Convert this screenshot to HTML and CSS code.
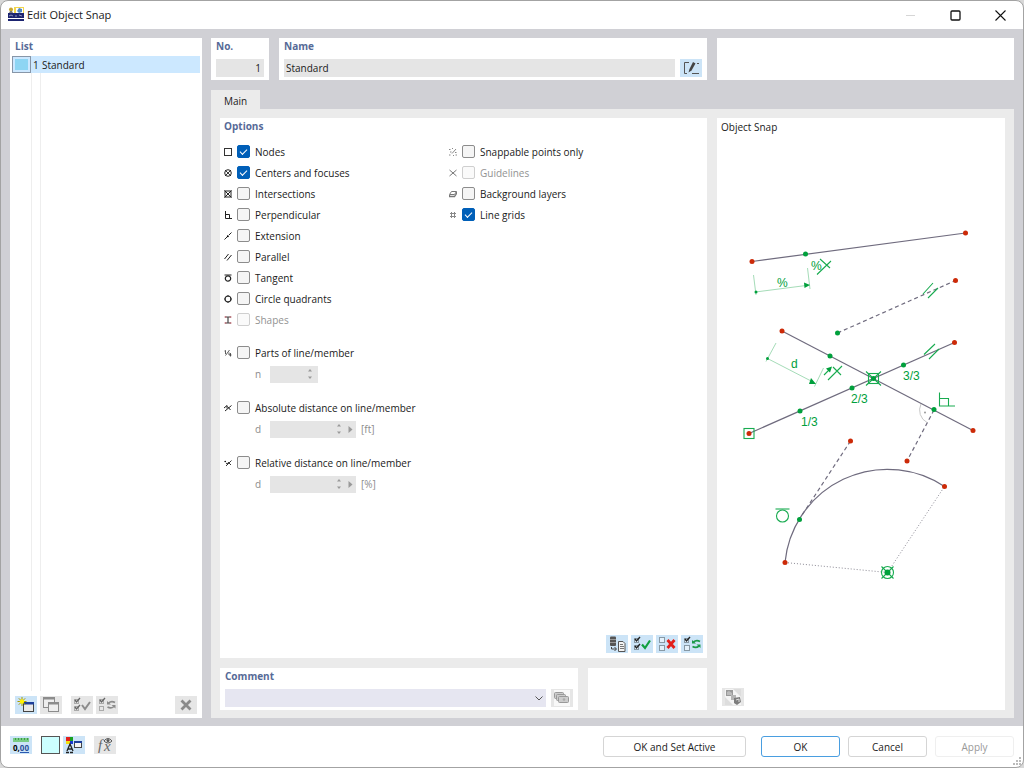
FILE: index.html
```
<!DOCTYPE html>
<html lang="en">
<head>
    <meta charset="UTF-8">
    <meta name="viewport" content="width=device-width, initial-scale=1.0">
    <title>Edit Object Snap</title>
    <link rel="stylesheet" href="styles.css">
</head>
<body>
    <div class="window">
        <header class="titlebar">
            <svg class="app-icon" width="16" height="16" viewBox="0 0 16 16">
                <rect x="6" y="0" width="10" height="8" fill="#f2d64c"/>
                <rect x="0" y="6" width="16" height="5" fill="#1c2470"/>
                <rect x="0" y="12" width="16" height="2" fill="#1c2470"/>
                <circle cx="3" cy="2.500" r="2" fill="#c9a62c"/>
                <path d="M1 6h4l-1-2H2z" fill="#777"/>
                <rect x="8" y="1" width="7" height="5" fill="#fff"/>
                <path d="M9 4l2-3 3 1v3l-3 1z" fill="#4f86c6"/>
                <path d="M1 9l2-1 2 1M7 9h2M11 8l3 1" stroke="#8d93c0" fill="none"/>
            </svg>
            <h1 class="title">Edit Object Snap</h1>
            <div class="window-buttons">
                <button type="button" class="window-btn" aria-label="Minimize" disabled>
                    <svg width="11" height="11" viewBox="0 0 11 11"><path d="M1 5.500h9" stroke="#d6d6d6"/></svg>
                </button>
                <button type="button" class="window-btn" aria-label="Maximize">
                    <svg width="11" height="11" viewBox="0 0 11 11"><rect x="1" y="1" width="9" height="9" rx="1" fill="none" stroke="#111" stroke-width="1.300"/></svg>
                </button>
                <button type="button" class="window-btn" aria-label="Close">
                    <svg width="11" height="11" viewBox="0 0 11 11"><path d="M.5.5l10 10M10.500.5l-10 10" stroke="#111" stroke-width="1.100"/></svg>
                </button>
            </div>
        </header>

        <main class="content">
            <section class="panel list-panel">
                <h2 class="label">List</h2>
                <div class="list-body">
                    <div class="list-row">
                        <span class="list-color"></span>
                        <span class="list-no">1</span>
                        <span>Standard</span>
                    </div>
                </div>
                <div class="toolbar list-toolbar">
                    <button type="button" class="tool" aria-label="New">
                        <svg width="20" height="18" viewBox="0 0 20 18">
                            <rect x="7.500" y="6.500" width="10" height="9" fill="#e9e9e9" stroke="#444"/>
                            <rect x="8" y="6" width="10" height="2.500" fill="#1d3f9c"/>
                            <path d="M6 1v9M1.500 5.500h9M2.800 2.300l6.400 6.400M9.200 2.300L2.800 8.700" stroke="#a99a00"/>
                            <circle cx="6" cy="5.500" r="2.200" fill="#fff200"/>
                        </svg>
                    </button>
                    <button type="button" class="tool off" aria-label="Copy" disabled>
                        <svg width="20" height="18" viewBox="0 0 20 18">
                            <g fill="#eee" stroke="#8c8c8c"><rect x="2.500" y="1.500" width="11" height="10"/><rect x="7.500" y="6.500" width="10" height="9"/></g>
                            <path d="M2 2.500h12M7 7.500h11" stroke="#8c8c8c" stroke-width="2"/>
                        </svg>
                    </button>
                    <button type="button" class="tool off spaced" aria-label="Select all" disabled>
                        <svg width="20" height="18" viewBox="0 0 20 18">
                            <g fill="none" stroke="#aaa"><rect x="2.500" y="3.500" width="4" height="4"/><rect x="2.500" y="10.500" width="4" height="4"/></g>
                            <path d="M3 4l1.500 2L8 2M3 11l1.500 2L8 9" fill="none" stroke="#666" stroke-width="1.300"/>
                            <path d="M10 9l3 4 5-7" fill="none" stroke="#8c8c8c" stroke-width="2"/>
                        </svg>
                    </button>
                    <button type="button" class="tool off" aria-label="Invert selection" disabled>
                        <svg width="20" height="18" viewBox="0 0 20 18">
                            <g fill="none" stroke="#aaa"><rect x="2.500" y="3.500" width="4" height="4"/><rect x="2.500" y="10.500" width="4" height="4"/></g>
                            <path d="M3 4l1.500 2L8 2" fill="none" stroke="#666" stroke-width="1.300"/>
                            <path d="M11.500 7q3-2.500 6.500-.5M17 10.500q-3 2.500-6.500.5" fill="none" stroke="#8c8c8c" stroke-width="1.600"/>
                            <path d="M10 5v3.500h4zM18.500 12.500V9h-4z" fill="#8c8c8c"/>
                        </svg>
                    </button>
                    <button type="button" class="tool off last" aria-label="Delete" disabled>
                        <svg width="20" height="18" viewBox="0 0 20 18"><path d="M5.500 4.500l9 9M14.500 4.500l-9 9" stroke="#8a8a8a" stroke-width="2.800"/></svg>
                    </button>
                </div>
            </section>

            <div class="details">
                <div class="top-row">
                    <section class="panel field-panel">
                        <label class="label" for="no">No.</label>
                        <input class="field number" id="no" type="text" value="1" readonly>
                    </section>
                    <section class="panel field-panel">
                        <label class="label" for="name">Name</label>
                        <div class="field-line">
                            <input class="field" id="name" type="text" value="Standard">
                            <button type="button" class="tool" aria-label="Edit name">
                                <svg width="20" height="18" viewBox="0 0 20 18">
                                    <path d="M8 3.500H3.500v11H6M11 14.500h7M16 4.500h2" fill="none" stroke="#555"/>
                                    <path d="M7.500 13.500l1-3.500L12 3l2.500 1.500-4 7z" fill="#444"/>
                                </svg>
                            </button>
                        </div>
                    </section>
                    <section class="panel"></section>
                </div>

                <nav class="tabs">
                    <button type="button" class="tab">Main</button>
                </nav>

                <div class="tab-page">
                    <div class="left-side">
                        <section class="panel options-panel">
                            <h2 class="label">Options</h2>
                            <div class="options">
                                <div class="option-column">
                                    <div class="option">
                                        <svg width="8" height="8" viewBox="0 0 8 8"><rect x=".5" y=".5" width="7" height="7" fill="none" stroke="#333"/></svg>
                                        <input type="checkbox" id="nodes" checked><label for="nodes">Nodes</label>
                                    </div>
                                    <div class="option">
                                        <svg width="8" height="8" viewBox="0 0 8 8"><circle cx="4" cy="4" r="3.300" fill="none" stroke="#222"/><path d="M1 1l6 6M7 1L1 7" stroke="#222" stroke-width=".9"/></svg>
                                        <input type="checkbox" id="centers" checked><label for="centers">Centers and focuses</label>
                                    </div>
                                    <div class="option">
                                        <svg width="8" height="8" viewBox="0 0 8 8"><rect x="1" y="1" width="6" height="6" fill="none" stroke="#222"/><path d="M.5.5l7 7M7.500.5l-7 7" stroke="#222"/></svg>
                                        <input type="checkbox" id="intersections"><label for="intersections">Intersections</label>
                                    </div>
                                    <div class="option">
                                        <svg width="8" height="8" viewBox="0 0 8 8"><path d="M1.500 0v7.500H8M1.500 3.500h4v4" fill="none" stroke="#222"/></svg>
                                        <input type="checkbox" id="perpendicular"><label for="perpendicular">Perpendicular</label>
                                    </div>
                                    <div class="option">
                                        <svg width="8" height="8" viewBox="0 0 8 8"><path d="M.5 7.500L4 4M5 3L7.500.5" stroke="#222"/><circle cx="3.800" cy="4.200" r="1"/></svg>
                                        <input type="checkbox" id="extension"><label for="extension">Extension</label>
                                    </div>
                                    <div class="option">
                                        <svg width="8" height="8" viewBox="0 0 8 8"><path d="M.5 6l4-5M3 7.500l4.500-5.500" stroke="#222"/></svg>
                                        <input type="checkbox" id="parallel"><label for="parallel">Parallel</label>
                                    </div>
                                    <div class="option">
                                        <svg width="8" height="8" viewBox="0 0 8 8"><path d="M.5 1h7" stroke="#222"/><circle cx="4" cy="4.500" r="2.700" fill="none" stroke="#222" stroke-width="1.200"/></svg>
                                        <input type="checkbox" id="tangent"><label for="tangent">Tangent</label>
                                    </div>
                                    <div class="option">
                                        <svg width="8" height="8" viewBox="0 0 8 8"><circle cx="4" cy="4" r="3" fill="none" stroke="#222" stroke-width="1.200"/><path d="M4 .3v1.500M4 6.200v1.500M.3 4h1.500M6.200 4h1.500" stroke="#222" stroke-width="1.200"/></svg>
                                        <input type="checkbox" id="quadrants"><label for="quadrants">Circle quadrants</label>
                                    </div>
                                    <div class="option">
                                        <svg width="8" height="8" viewBox="0 0 8 8"><path d="M1 1h6M1 7h6M4 1v6" stroke="#444" stroke-width="1.200"/><path d="M.5 1h2M5.500 1h2M.5 7h2M5.500 7h2" stroke="#d0606c"/></svg>
                                        <input type="checkbox" id="shapes" disabled><label for="shapes">Shapes</label>
                                    </div>

                                    <div class="option-group">
                                        <div class="option">
                                            <svg width="8" height="8" viewBox="0 0 8 8"><path d="M.5 2l1-.5V5M1.500 6.500l4-5.500M5 3.500v2.500h2.500M6.500 4v3.500" fill="none" stroke="#333" stroke-width=".8"/></svg>
                                            <input type="checkbox" id="parts"><label for="parts">Parts of line/member</label>
                                        </div>
                                        <div class="value-line">
                                            <label for="parts-n">n</label>
                                            <span class="spin short">
                                                <input type="text" id="parts-n" disabled>
                                                <svg width="6" height="12" viewBox="0 0 6 12"><path d="M1 3.500l2-2.500 2 2.500zM1 8.500L3 11l2-2.500z" fill="#999"/></svg>
                                            </span>
                                        </div>
                                    </div>
                                    <div class="option-group">
                                        <div class="option">
                                            <svg width="8" height="8" viewBox="0 0 8 8"><path d="M1 7l6.500-5.500M0 4l3-2.500v3M3.500 2.500l3 3.500" fill="none" stroke="#222"/></svg>
                                            <input type="checkbox" id="absolute"><label for="absolute">Absolute distance on line/member</label>
                                        </div>
                                        <div class="value-line">
                                            <label for="absolute-d">d</label>
                                            <span class="spin">
                                                <input type="text" id="absolute-d" disabled>
                                                <svg width="6" height="12" viewBox="0 0 6 12"><path d="M1 3.500l2-2.500 2 2.500zM1 8.500L3 11l2-2.500z" fill="#999"/></svg>
                                                <svg width="5" height="7" viewBox="0 0 5 7"><path d="M.5 0v7L4.500 3.500z" fill="#999"/></svg>
                                            </span>
                                            <span>[ft]</span>
                                        </div>
                                    </div>
                                    <div class="option-group">
                                        <div class="option">
                                            <svg width="8" height="8" viewBox="0 0 8 8"><path d="M2 7l5.500-5.500M4 3l3 3" fill="none" stroke="#222" stroke-width=".9"/><circle cx="1.200" cy="2.500" r=".8"/><circle cx="3" cy="4.500" r=".8"/></svg>
                                            <input type="checkbox" id="relative"><label for="relative">Relative distance on line/member</label>
                                        </div>
                                        <div class="value-line">
                                            <label for="relative-d">d</label>
                                            <span class="spin">
                                                <input type="text" id="relative-d" disabled>
                                                <svg width="6" height="12" viewBox="0 0 6 12"><path d="M1 3.500l2-2.500 2 2.500zM1 8.500L3 11l2-2.500z" fill="#999"/></svg>
                                                <svg width="5" height="7" viewBox="0 0 5 7"><path d="M.5 0v7L4.500 3.500z" fill="#999"/></svg>
                                            </span>
                                            <span>[%]</span>
                                        </div>
                                    </div>
                                </div>

                                <div class="option-column">
                                    <div class="option">
                                        <svg width="8" height="8" viewBox="0 0 8 8"><path d="M0 1.500h1.500M3 .5h1M1 4h1.500M3 5.500l4-4.500M0 7h1.500M4 7.500h1M6 4.500h1.500M6.500 7H8" stroke="#888"/></svg>
                                        <input type="checkbox" id="snappable"><label for="snappable">Snappable points only</label>
                                    </div>
                                    <div class="option">
                                        <svg width="8" height="8" viewBox="0 0 8 8"><path d="M.5 1l7 6M7.500 1l-7 6" stroke="#777"/></svg>
                                        <input type="checkbox" id="guidelines" disabled><label for="guidelines">Guidelines</label>
                                    </div>
                                    <div class="option">
                                        <svg width="8" height="8" viewBox="0 0 8 8"><path d="M2.500 1.500h5l-2 3h-5z" fill="#fff" stroke="#777"/><path d="M.5 5v1.500h5l2-3V2" fill="none" stroke="#777" stroke-width="1.300"/></svg>
                                        <input type="checkbox" id="background"><label for="background">Background layers</label>
                                    </div>
                                    <div class="option">
                                        <svg width="8" height="8" viewBox="0 0 8 8"><path d="M2.500 1v6M5.500 1v6M1 2.500h6M1 5.500h6" stroke="#888"/></svg>
                                        <input type="checkbox" id="grids" checked><label for="grids">Line grids</label>
                                    </div>
                                </div>
                            </div>
                            <div class="toolbar options-toolbar">
                                <button type="button" class="tool" aria-label="Copy from list">
                                    <svg width="20" height="18" viewBox="0 0 20 18">
                                        <rect x="3" y="1.500" width="6" height="9.500" rx="1" fill="#555"/>
                                        <path d="M3 4.500h6M3 7.500h6" stroke="#aaa" stroke-width=".8"/>
                                        <path d="M4.500 12v2h4.500M7.500 12l2 2-2 2" fill="none" stroke="#444"/>
                                        <path d="M11.500 6.500h4.500l2 2v8h-6.500z" fill="#f3f3f3" stroke="#555"/>
                                        <path d="M13 9.500h3M13 11.500h4M13 13.500h4" stroke="#777"/>
                                    </svg>
                                </button>
                                <button type="button" class="tool" aria-label="Check all">
                                    <svg width="20" height="18" viewBox="0 0 20 18">
                                        <g fill="#e4f1fb" stroke="#8899a5"><rect x="2.500" y="3.500" width="4" height="4"/><rect x="2.500" y="10.500" width="4" height="4"/></g>
                                        <path d="M3 4l1.500 2L8 2M3 11l1.500 2L8 9" fill="none" stroke="#222" stroke-width="1.400"/>
                                        <path d="M10 9.500l3 3.500 5-7.500" fill="none" stroke="#10a040" stroke-width="2.200"/>
                                    </svg>
                                </button>
                                <button type="button" class="tool" aria-label="Uncheck all">
                                    <svg width="20" height="18" viewBox="0 0 20 18">
                                        <g fill="#e4f1fb" stroke="#8899a5"><rect x="2.500" y="2.500" width="5" height="5"/><rect x="2.500" y="10.500" width="5" height="5"/></g>
                                        <path d="M10.500 5l7 8M17.500 5l-7 8" stroke="#e3201b" stroke-width="2.800"/>
                                    </svg>
                                </button>
                                <button type="button" class="tool" aria-label="Invert checks">
                                    <svg width="20" height="18" viewBox="0 0 20 18">
                                        <g fill="#e4f1fb" stroke="#8899a5"><rect x="2.500" y="3.500" width="4" height="4"/><rect x="2.500" y="10.500" width="5" height="5"/></g>
                                        <path d="M3 4l1.500 2L8 2" fill="none" stroke="#222" stroke-width="1.400"/>
                                        <path d="M11.500 7q3-2.500 6.500-.5M17 11q-3 2.500-6.500.5" fill="none" stroke="#1b9a48" stroke-width="1.700"/>
                                        <path d="M10 5v3.500h4zM18.500 13V9.500h-4z" fill="#1b9a48"/>
                                    </svg>
                                </button>
                            </div>
                        </section>

                        <div class="comment-row">
                            <section class="panel field-panel">
                                <label class="label" for="comment">Comment</label>
                                <div class="field-line">
                                    <select class="comment-select" id="comment"><option></option></select>
                                    <button type="button" class="tool off" aria-label="Comment library">
                                        <svg width="20" height="18" viewBox="0 0 20 18">
                                            <rect x="2" y="1" width="16" height="16" fill="#f8f8f8"/>
                                            <g fill="#ccc" stroke="#999"><rect x="2.500" y="3.500" width="9" height="6" rx="1"/><rect x="4.500" y="5.500" width="9" height="6" rx="1"/><rect x="6.500" y="7.500" width="10" height="6" rx="1"/></g>
                                            <circle cx="12" cy="10.500" r="1.300" fill="#aaa"/>
                                        </svg>
                                    </button>
                                </div>
                            </section>
                            <section class="panel"></section>
                        </div>
                    </div>

                    <section class="panel preview-panel">
                        <h2 class="preview-title">Object Snap</h2>
                        <svg class="preview" viewBox="717 140 288 546">
                            <!-- solid lines and arc -->
                            <g fill="none" stroke="#6f6b7e" stroke-width="1.200">
                                <path d="M752 260.500L965.500 232"/>
                                <path d="M782 330L973 429.500"/>
                                <path d="M749 432.500L954.500 341.500"/>
                                <path d="M785 561.500A103 103 0 0 1 944.500 485.500"/>
                                <g stroke-dasharray="4 3">
                                    <path d="M837.500 332L955.500 279.500"/>
                                    <path d="M934 409L907 460"/>
                                    <path d="M850.500 440L808 505L799 518.500"/>
                                </g>
                                <g stroke="#8b8994" stroke-width="1" stroke-dasharray="1 2">
                                    <path d="M785 561.500L887.500 571.500L944.500 485.500"/>
                                </g>
                                <path d="M921 403A14 14 0 0 0 927 421.500" stroke="#c8c8c8" stroke-width="1"/>
                            </g>
                            <!-- dimension lines -->
                            <g fill="none" stroke="#a5dcb8">
                                <path d="M755.500 291L806 284.500M753.500 274l2.500 20M807.500 267l2.500 21"/>
                                <path d="M767.500 357.500L813 381M776 342l-10 18.500M823.500 367l-9 18.500"/>
                            </g>
                            <!-- snap symbols -->
                            <g fill="none" stroke="#18ab50" stroke-width="1.100">
                                <path d="M817 273.500l14-13.500M820 258l10 9"/>
                                <path d="M923 293l10-11M928 297l10-10"/>
                                <path d="M924 353.500l11-10.500M929 358l10-10"/>
                                <path d="M828 379l14-14M833 366l8 8M824 374l5-5"/>
                                <rect x="868.500" y="372.500" width="10" height="10"/>
                                <path d="M866 370.500l15 14M881 370.500l-15 14"/>
                                <path d="M939.500 391.500V405H955M939.500 397.500h9V405"/>
                                <rect x="744" y="427.500" width="10" height="10"/>
                                <path d="M775.500 508h14"/>
                                <circle cx="782.500" cy="515" r="6"/>
                                <circle cx="887.500" cy="571.500" r="6"/>
                                <path d="M881.500 565.500l12 12M893.500 565.500l-12 12"/>
                            </g>
                            <g fill="#00a03c">
                                <path d="M804 281.500l6 2.500-5.500 3zM811 377l5 6h-7zM832 365.500l-2 6-4-4z"/>
                                <circle cx="756" cy="291" r="1.500"/>
                                <circle cx="767.500" cy="357.500" r="1.500"/>
                                <circle cx="805.500" cy="253" r="2.500"/>
                                <circle cx="837.500" cy="332" r="2.500"/>
                                <circle cx="830" cy="355" r="2.500"/>
                                <circle cx="873.500" cy="377.500" r="2.500"/>
                                <circle cx="903.500" cy="364" r="2.500"/>
                                <circle cx="852" cy="387" r="2.500"/>
                                <circle cx="800" cy="410" r="2.500"/>
                                <circle cx="934" cy="408.500" r="2.500"/>
                                <circle cx="799.500" cy="518.500" r="2.500"/>
                                <circle cx="887.500" cy="571.500" r="3"/>
                            </g>
                            <g fill="#cc2a08">
                                <circle cx="752" cy="260.500" r="2.500"/>
                                <circle cx="965.500" cy="232" r="2.500"/>
                                <circle cx="955.500" cy="279.500" r="2.500"/>
                                <circle cx="782" cy="330" r="2.500"/>
                                <circle cx="954.500" cy="341.500" r="2.500"/>
                                <circle cx="749" cy="432.500" r="2.500"/>
                                <circle cx="973" cy="429.500" r="2.500"/>
                                <circle cx="850.500" cy="440" r="2.500"/>
                                <circle cx="907" cy="460" r="2.500"/>
                                <circle cx="944.500" cy="485.500" r="2.500"/>
                                <circle cx="785" cy="561.500" r="2.500"/>
                            </g>
                            <circle cx="925" cy="411.500" r="1" fill="#999"/>
                            <g class="preview-text">
                                <text x="777" y="286">%</text>
                                <text x="811" y="269">%</text>
                                <text x="791" y="367">d</text>
                                <text x="903" y="379">3/3</text>
                                <text x="851" y="402">2/3</text>
                                <text x="801" y="425">1/3</text>
                            </g>
                        </svg>
                        <div class="toolbar preview-toolbar">
                            <button type="button" class="tool off" aria-label="Preview settings">
                                <svg width="20" height="18" viewBox="0 0 20 18">
                                    <rect x="2" y="1" width="16" height="16" fill="#f4f4f4"/>
                                    <path d="M10 1h8v8zM2 9v8h8z" fill="#ddd"/>
                                    <rect x="3" y="2" width="7" height="6" fill="#999"/>
                                    <path d="M4 4l2-1 3 2v2H4z" fill="#bbb"/>
                                    <rect x="8" y="7" width="5" height="5" fill="#b5b5b5"/>
                                    <path d="M11 10l6-1 1 5-4 3-3-2z" fill="#7d7d7d"/>
                                    <path d="M13 12l3-1v3" fill="none" stroke="#ddd"/>
                                </svg>
                            </button>
                        </div>
                    </section>
                </div>
            </div>
        </main>

        <footer class="footer">
            <div class="toolbar">
                <button type="button" class="tool" aria-label="Units">
                    <svg width="20" height="18" viewBox="0 0 20 18">
                        <rect x="2" y="2" width="16" height="4" fill="#79cc83"/>
                        <path d="M4.500 2v2M7.500 2v2M10.500 2v2M13.500 2v2M16.500 2v2" stroke="#3d9a4c"/>
                        <path d="M9 16.500h9" stroke="#2a59b0"/>
                        <text class="units-text" x="2" y="15">0,<tspan fill="#2a4f9a">00</tspan></text>
                    </svg>
                </button>
                <button type="button" class="color-swatch" aria-label="Color"></button>
                <button type="button" class="tool" aria-label="Display properties">
                    <svg width="20" height="18" viewBox="0 0 20 18">
                        <rect x="2" y="1" width="4" height="4" fill="#e3201b"/><rect x="6" y="1" width="3" height="4" fill="#18a020"/>
                        <rect x="2" y="5" width="4" height="3" fill="#f3e010"/><rect x="6" y="5" width="3" height="3" fill="#1839d0"/>
                        <path d="M3 15L6 8l3 7M4 13h4M2 16.500h3M6 16.500h3" fill="none" stroke="#222" stroke-width="1.300"/>
                        <rect x="10.500" y="5.500" width="7" height="6" fill="#f4f4f4" stroke="#444"/>
                        <path d="M10 6h8" stroke="#1d3f9c" stroke-width="2"/>
                    </svg>
                </button>
                <button type="button" class="tool off spaced" aria-label="Formula">
                    <svg width="20" height="18" viewBox="0 0 20 18">
                        <text class="fx-text" x="3" y="14">f</text>
                        <text class="fx-text" x="9" y="15">x</text>
                        <path d="M9 5q4-5 8 0-4 4-8 0z" fill="#eee" stroke="#555"/>
                        <circle cx="13" cy="4.500" r="1.500" fill="#555"/>
                    </svg>
                </button>
            </div>
            <div class="dialog-buttons">
                <button type="button" class="btn wide">OK and Set Active</button>
                <button type="button" class="btn primary">OK</button>
                <button type="button" class="btn">Cancel</button>
                <button type="button" class="btn" disabled>Apply</button>
            </div>
            <svg class="grip" width="8" height="8" viewBox="0 0 8 8"><path d="M6 0h2v2H6zM3 3h2v2H3zM6 3h2v2H6zM0 6h2v2H0zM3 6h2v2H3zM6 6h2v2H6z" fill="#bbb"/></svg>
        </footer>
    </div>
</body>
</html>
```
FILE: styles.css
```
* {
    box-sizing: border-box;
}
body {
    margin: 0;
    background-color: #d8d8d8;
    color: #1a1a1a;
    font-family: "Open Sans", "Noto Sans", sans-serif;
    font-size: 10px;
    line-height: 16px;
}
button, input, select {
    margin: 0;
    padding: 0;
    border: 0;
    font: inherit;
    color: inherit;
}
svg {
    display: block;
    flex: none;
}
.window {
    display: flex;
    flex-direction: column;
    min-height: 100vh;
    background: #fff;
    border: 1px solid #a3a3a3;
    border-radius: 8px;
    overflow: hidden;
}

/* title bar */
.titlebar {
    display: flex;
    align-items: center;
    height: 28px;
    padding-left: 7px;
}
.title {
    margin: 0 0 0 3px;
    font-size: 11px;
    font-weight: normal;
}
.window-buttons {
    display: flex;
    margin-left: auto;
}
.window-btn {
    display: flex;
    align-items: center;
    justify-content: center;
    width: 45px;
    height: 28px;
    background: none;
}

/* main area */
.content {
    flex: 1;
    display: flex;
    gap: 9px;
    padding: 9px 9px 8px;
    background: #d0d0d5;
}
.panel {
    background: #fff;
}
.label {
    display: block;
    margin: 0;
    font-size: 10px;
    font-weight: bold;
    line-height: 16px;
    color: #566a97;
}
.list-panel {
    display: flex;
    flex-direction: column;
    width: 192px;
}
.list-panel .label {
    padding: 0 5px;
    margin-bottom: 2px;
}
.list-body {
    flex: 1;
    margin: 0 2px 5px;
    background:
        linear-gradient(#eee, #eee) 19px 0 / 1px 100% no-repeat,
        linear-gradient(#eee, #eee) 28px 0 / 1px 100% no-repeat;
}
.list-row {
    display: flex;
    align-items: center;
    height: 17px;
    background: #cce8ff;
}
.list-color {
    width: 19px;
    height: 17px;
    border: 1px solid #8796a8;
    background: #8dd5f3;
    box-shadow: inset 0 0 0 2px #cce8ff;
}
.list-no {
    width: 11px;
    padding-left: 2px;
}
.toolbar {
    display: flex;
    gap: 3px;
}
.tool {
    display: flex;
    align-items: center;
    justify-content: center;
    flex: none;
    width: 22px;
    height: 18px;
    background: #cce4f7;
}
.tool.off {
    background: #e6e6e6;
}
.tool.spaced {
    margin-left: 6px;
}
.list-toolbar {
    padding: 0 5px 4px;
}
.list-toolbar .last {
    margin-left: auto;
}
.details {
    flex: 1;
    display: flex;
    flex-direction: column;
}
.top-row {
    display: grid;
    grid-template-columns: 58px 1fr 297px;
    gap: 10px;
}
.field-panel {
    padding: 0 5px 3px;
}
.field-panel .label {
    margin-bottom: 5px;
}
.field-line {
    display: flex;
    gap: 5px;
}
.field {
    display: block;
    width: 100%;
    height: 18px;
    padding: 0 2px;
    background: #e5e5e5;
}
.field.number {
    padding-right: 3px;
    text-align: right;
}

/* tabs */
.tabs {
    display: flex;
    margin-top: 10px;
}
.tab {
    height: 19px;
    padding: 2px 13px 0;
    background: #ebebeb;
}
.tab-page {
    flex: 1;
    display: grid;
    grid-template-columns: 1fr 288px;
    gap: 10px;
    padding: 9px 9px 8px;
    background: #ebebeb;
}
.left-side {
    display: flex;
    flex-direction: column;
    gap: 10px;
}
.options-panel {
    flex: 1;
    display: flex;
    flex-direction: column;
    padding: 0 4px 5px;
}
.options {
    flex: 1;
    display: flex;
    margin-top: 7px;
}
.option-column {
    width: 225px;
}
.option {
    display: flex;
    align-items: center;
    height: 21px;
}
.option input {
    appearance: none;
    display: grid;
    place-items: center;
    width: 13px;
    height: 13px;
    margin: 0 5px;
    background: #f5f5f5;
    border: 1px solid #8c8c8c;
    border-radius: 2px;
}
.option input:checked {
    background: #005fb8;
    border-color: #005fb8;
}
.option input:checked::after {
    content: "";
    width: 6px;
    height: 3px;
    margin-bottom: 2px;
    border-left: 1px solid #fff;
    border-bottom: 1px solid #fff;
    transform: rotate(-45deg);
}
.option input:disabled {
    background: #fafafa;
    border-color: #cfcfcf;
}
.option input:disabled + label {
    color: #929292;
}
.option-group {
    margin-top: 12px;
}
.value-line {
    display: flex;
    align-items: center;
    gap: 5px;
    height: 22px;
    padding-left: 31px;
    color: #8c8c8c;
}
.value-line label {
    width: 10px;
}
.spin {
    display: flex;
    align-items: center;
    gap: 6px;
    width: 86px;
    height: 17px;
    padding-right: 3px;
    background: #e5e5e5;
}
.spin.short {
    width: 48px;
    padding-right: 5px;
}
.spin input {
    flex: 1;
    min-width: 0;
    background: none;
}
.options-toolbar {
    justify-content: flex-end;
}
.comment-row {
    display: grid;
    grid-template-columns: 1fr 119px;
    gap: 10px;
}
.comment-select {
    appearance: none;
    flex: 1;
    height: 18px;
    padding-right: 16px;
    border-radius: 0;
    background: #e6e6f1 url("data:image/svg+xml,%3Csvg xmlns='http://www.w3.org/2000/svg' width='8' height='5'%3E%3Cpath d='M.5.5L4 4 7.500.5' fill='none' stroke='%23555'/%3E%3C/svg%3E") no-repeat right 3px center;
}

/* preview */
.preview-panel {
    display: flex;
    flex-direction: column;
}
.preview-title {
    margin: 0;
    padding: 1px 4px 5px;
    font-size: 10px;
    font-weight: normal;
}
.preview {
    flex: 1;
    width: 100%;
}
.preview-text {
    fill: #00a03c;
    font-family: "Liberation Sans", Arial, sans-serif;
    font-size: 12px;
}
.preview-toolbar {
    padding: 0 5px 4px;
}

/* footer */
.footer {
    position: relative;
    display: flex;
    justify-content: space-between;
    align-items: flex-start;
    height: 41px;
    padding: 10px 9px 0;
}
.color-swatch {
    width: 19px;
    height: 18px;
    margin-left: 6px;
    background: #ccffff;
    border: 1px solid #555;
}
.units-text {
    font-family: "Open Sans", sans-serif;
    font-size: 8px;
    font-weight: bold;
}
.fx-text {
    fill: #666;
    font-family: "Liberation Serif", serif;
    font-size: 15px;
    font-style: italic;
}
.dialog-buttons {
    display: flex;
    gap: 8px;
}
.btn {
    width: 79px;
    height: 21px;
    background: #fff;
    border: 1px solid #d5d5d5;
    border-radius: 3px;
}
.btn.wide {
    width: 143px;
    margin-right: 7px;
}
.btn.primary {
    border-color: #4a9ee0;
}
.btn:disabled {
    color: #999;
    border-color: #efefef;
}
.grip {
    position: absolute;
    right: 2px;
    bottom: 2px;
}
```
